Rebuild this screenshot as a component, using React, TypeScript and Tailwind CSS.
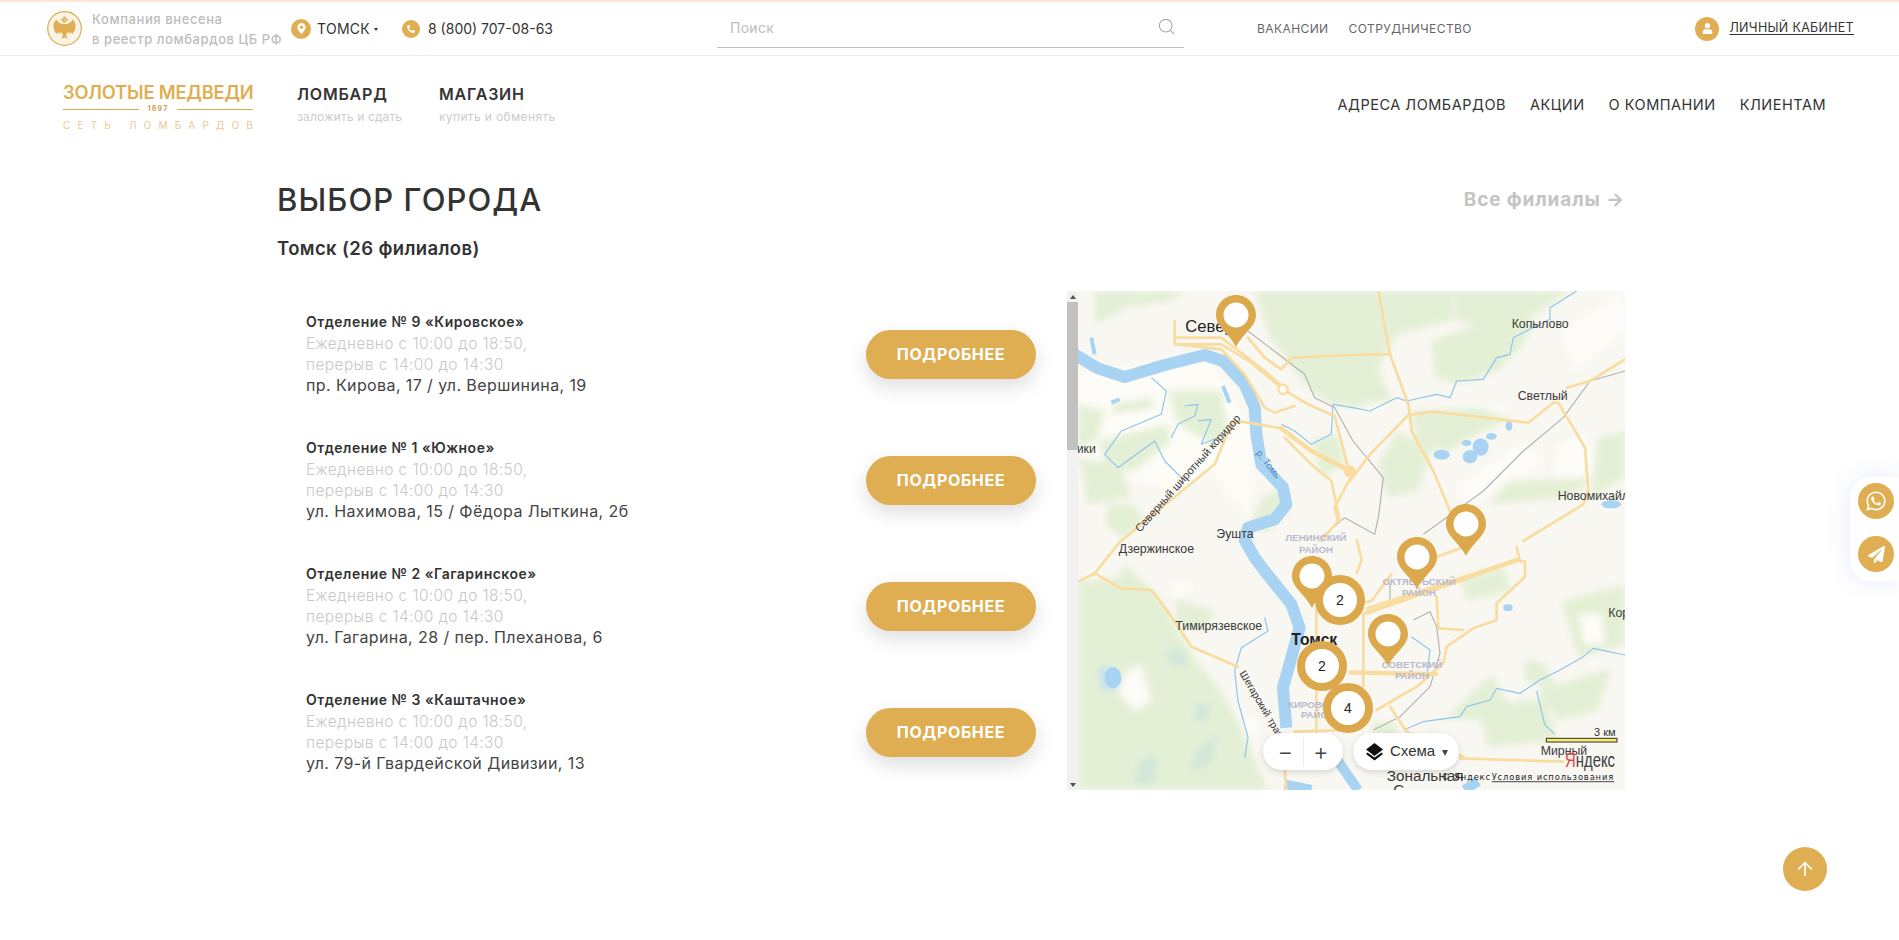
import { ArrowUp, Search } from "lucide-react";
import { FaMapMarkerAlt, FaPaperPlane, FaPhoneAlt, FaUser, FaWhatsapp } from "react-icons/fa";

const branches = [
  { title: "Отделение № 9 «Кировское»", address: "пр. Кирова, 17 / ул. Вершинина, 19" },
  { title: "Отделение № 1 «Южное»", address: "ул. Нахимова, 15 / Фёдора Лыткина, 2б" },
  { title: "Отделение № 2 «Гагаринское»", address: "ул. Гагарина, 28 / пер. Плеханова, 6" },
  { title: "Отделение № 3 «Каштачное»", address: "ул. 79-й Гвардейской Дивизии, 13" },
];

const pins = [
  "left-[138px] top-[4px]",
  "left-[368px] top-[213px]",
  "left-[319px] top-[246px]",
  "left-[214px] top-[265px]",
  "left-[290px] top-[323px]",
];

const clusters = [
  { n: 2, pos: "left-[237px] top-[284px]" },
  { n: 2, pos: "left-[219px] top-[350px]" },
  { n: 4, pos: "left-[245px] top-[392px]" },
];

const greens = [
  "M530 0 L1130 0 L1120 90 L960 130 L900 230 L940 330 L820 345 L770 345 L700 300 L640 230 L570 130 Z",
  "M50 100 L150 50 L280 30 L320 0 L50 0 Z",
  "M270 300 L430 300 L450 420 L400 460 L300 400 Z",
  "M0 340 L80 360 L60 440 L0 480 Z",
  "M100 340 L220 320 L230 350 L110 370 Z",
  "M60 450 L270 400 L280 450 L170 540 L90 540 Z",
  "M0 500 L130 520 L160 620 L30 640 Z",
  "M90 640 L170 640 L200 690 L130 740 L80 700 Z",
  "M1060 150 L1300 60 L1370 100 L1320 180 L1260 240 L1140 280 L1070 260 Z",
  "M1130 0 L1480 0 L1400 50 L1310 120 L1130 90 Z",
  "M820 190 L900 200 L920 330 L820 350 Z",
  "M1000 360 L1200 350 L1300 380 L1110 480 L1020 470 Z",
  "M1560 440 L1641 420 L1641 560 L1540 620 Z",
  "M1290 570 L1540 560 L1480 620 L1230 640 Z",
  "M960 420 L1060 480 L1020 600 L930 620 L900 520 Z",
  "M700 450 L780 430 L800 520 L730 560 Z",
  "M550 620 L610 590 L630 660 L560 730 L520 690 Z",
  "M0 870 L120 860 L140 820 L240 910 L340 1090 L430 1200 L500 1330 L570 1497 L0 1497 Z",
  "M290 920 L410 960 L380 1020 L300 1010 Z",
  "M1140 860 L1280 830 L1300 900 L1170 930 Z",
  "M1060 1320 L1240 1150 L1290 1240 L1220 1290 L1100 1280 L1030 1340 Z",
  "M1340 1100 L1400 1120 L1440 1200 L1340 1170 Z",
  "M1380 1200 L1600 1130 L1560 1260 L1440 1290 Z",
  "M1450 930 L1641 880 L1641 1060 L1500 1100 Z",
  "M1200 1250 L1400 1220 L1440 1350 L1230 1370 Z",
  "M880 1290 L960 1300 L940 1370 L890 1340 Z",
];

const whites = [
  "M20 480 L60 470 L50 560 L10 560 Z",
  "M180 300 L290 260 L250 340 L160 350 Z",
  "M700 60 L750 60 L720 105 Z",
  "M830 130 L930 90 L920 150 L850 160 Z",
  "M860 320 L920 310 L920 350 L870 360 Z",
  "M1100 370 L1300 340 L1220 440 L1120 480 Z",
  "M1450 120 L1640 0 L1641 120 L1490 240 Z",
  "M1440 470 L1520 420 L1540 540 L1420 600 Z",
  "M1130 590 L1340 450 L1400 520 L1180 640 Z",
  "M150 1140 L190 1120 L220 1230 L170 1260 L120 1200 Z",
  "M280 880 L340 870 L340 900 L290 930 Z",
  "M490 1290 L540 1280 L535 1330 L500 1340 Z",
  "M1500 970 L1570 970 L1580 1060 L1520 1060 Z",
];

const roads = [
  "M290 90 L290 160 L430 160 L520 215 L615 295 L690 340 L770 375 L810 530",
  "M295 140 L430 140 L560 240 L605 280",
  "M300 160 L430 175 L500 250 L560 350 L590 365 L650 345",
  "M510 140 L560 200 L610 235 L640 200 L825 192 L931 190",
  "M901 0 L936 190 L991 340 L996 375 L1001 420 L1066 540 L1116 660",
  "M816 570 L876 490 L991 372 L1066 362 L1351 395 L1426 335 L1441 335 L1521 470 L1531 600 L1516 640 L1336 750",
  "M1641 205 L1536 270 L1466 290",
  "M620 440 L700 520 L760 570 L785 690",
  "M825 545 L770 650 L780 690 L730 750",
  "M130 750 L200 690 L300 610 L410 520 L460 400 L490 392 L610 412",
  "M130 747 L50 847 L0 872",
  "M50 847 L130 892 L220 897 L280 977 L340 1067 L480 1127",
  "M715 947 L715 1347",
  "M650 1322 L800 1317",
  "M856 967 L856 1187",
  "M816 1142 L1076 1147",
  "M816 1147 L1076 1152",
  "M866 952 L1316 807 L1341 812 L1341 857 L1256 937 L1256 987 L1186 1012 L1106 1067 L1096 1117 L1016 1187 L896 1257",
  "M1076 917 L1081 1012 L1156 1017",
  "M1316 767 L1326 812",
  "M1146 1402 L1456 1412",
  "M936 1247 L986 1322 L1156 1397",
  "M620 1437 L625 1497",
  "M836 747 L851 807 L836 847",
  "M716 950 L780 950 L880 930 L940 850",
  "M1016 820 L1180 760",
];

const thickRoads = ["M610 412 L700 480 L825 545", "M866 965 L1316 807"];

const rivers = [
  "M220 260 L265 300 L250 370 L130 420 L80 490 L120 530 L230 450 L260 510 L310 560",
  "M320 345 L360 340 L350 375 L300 400 L280 440",
  "M360 390 L400 385 L370 460 L420 440",
  "M610 400 L650 420 L700 460 L760 430 L765 340 L825 350 L876 360 L956 320 L986 330 L1076 310 L1116 320 L1136 270 L1216 265 L1256 200 L1296 190 L1306 140 L1356 115 L1416 85 L1416 50 L1496 0",
  "M976 1317 L1036 1292 L1146 1277 L1166 1247 L1236 1227 L1256 1192 L1326 1207 L1386 1167 L1446 1137 L1516 1097 L1546 1072 L1641 1092",
  "M1046 1157 L1056 1077 L1000 1037",
  "M1376 1200 L1400 1300 L1430 1330",
  "M560 980 L570 1020 L490 1070 L470 1140 L480 1230 L510 1340 L500 1400",
];

const rails = [
  "M510 120 L680 250 L710 320 L770 350 L825 450 L916 560 L901 680 L890 730 L800 680 L730 740",
  "M1036 730 L1216 600 L1336 480 L1456 380 L1536 270 L1641 240",
  "M936 927 L936 877 M1006 987 L1056 962 L1076 1007 L1086 1087 L1056 1187 L966 1277 L886 1317",
];

const lakes = [
  { cx: 1091, cy: 491, rx: 24, ry: 15 },
  { cx: 1176, cy: 497, rx: 22, ry: 20 },
  { cx: 1208, cy: 468, rx: 24, ry: 26 },
  { cx: 1240, cy: 436, rx: 16, ry: 10 },
  { cx: 1166, cy: 456, rx: 14, ry: 9 },
  { cx: 1293, cy: 405, rx: 10, ry: 15 },
  { cx: 1600, cy: 640, rx: 30, ry: 12 },
  { cx: 1290, cy: 950, rx: 14, ry: 10 },
  { cx: 105, cy: 1160, rx: 25, ry: 32 },
];

function YandexMap() {
  return (
    <svg viewBox="0 0 1641 1497" className="absolute inset-0 h-full w-full font-['Liberation_Sans',sans-serif]">
      <defs>
        <filter id="soft" x="-5%" y="-5%" width="110%" height="110%">
          <feGaussianBlur stdDeviation="9" />
        </filter>
        <filter id="line" x="-5%" y="-5%" width="110%" height="110%">
          <feGaussianBlur stdDeviation="1.2" />
        </filter>
      </defs>
      <rect width="1641" height="1497" fill="#f9f7f2" />
      <g filter="url(#soft)">
        {whites.slice(0, 9).map((d) => (
          <path key={d} d={d} fill="#fdfcf8" />
        ))}
        <path d="M0 240 L400 200 L520 420 L520 700 L400 540 L300 600 L180 570 L0 560 Z" fill="#fdfcf6" />
        {greens.map((d) => (
          <path key={d} d={d} fill="#e4f0d6" />
        ))}
        {whites.slice(9).map((d) => (
          <path key={d} d={d} fill="#fdfcf8" />
        ))}
        <path d="M265 1075 L320 1075 L330 1130 L270 1120 Z M350 1240 L400 1240 L390 1290 L350 1290 Z M180 1410 L240 1390 L230 1480 L170 1480 Z M350 1380 L420 1330 L400 1420 L340 1440 Z" fill="#d2e7da" />
        <path d="M60 1130 L95 1125 L125 1190 L70 1200 Z" fill="#c6e0ef" />
      </g>

      <g filter="url(#line)">
        {rivers.map((d) => (
          <path key={d} d={d} fill="none" stroke="#8ec5ec" strokeWidth="3.5" strokeLinejoin="round" />
        ))}
        <path
          d="M-10 190 L60 232 L140 258 L260 222 L380 192 L435 210 L500 280 L530 350 L535 430 L550 520 L615 590 L625 640 L590 685 L510 710 L500 747 L530 800 L560 840 L640 940 L665 1010 L640 1100 L615 1190 L625 1310"
          fill="none"
          stroke="#a8d3f3"
          strokeWidth="36"
          strokeLinejoin="round"
        />
        <path d="M620 1480 L700 1497 M780 1410 L840 1497 M1160 1497 L1200 1470" stroke="#a8d3f3" strokeWidth="30" fill="none" />
        <path d="M40 140 L50 190 M435 285 L455 335 M125 325 L100 335" stroke="#a8d3f3" strokeWidth="12" fill="none" />
        {lakes.map((l) => (
          <ellipse key={l.cx} cx={l.cx} cy={l.cy} rx={l.rx} ry={l.ry} fill="#a8d3f3" />
        ))}

        {rails.map((d) => (
          <path key={d} d={d} fill="none" stroke="#b3b3b3" strokeWidth="3.5" strokeLinejoin="round" />
        ))}
        {roads.map((d) => (
          <path key={d} d={d} fill="none" stroke="#f9dc9f" strokeWidth="8" strokeLinejoin="round" strokeLinecap="round" />
        ))}
        {thickRoads.map((d) => (
          <path key={d} d={d} fill="none" stroke="#f9dc9f" strokeWidth="14" strokeLinejoin="round" strokeLinecap="round" />
        ))}
        <circle cx="615" cy="295" r="14" fill="#fdfcf8" stroke="#f9dc9f" strokeWidth="7" />
        <circle cx="815" cy="540" r="18" fill="#f9dc9f" />
      </g>

      <g fontSize="37" fill="#3a3a3a">
        <text x="322" y="122" fontSize="50" fontWeight="500" fill="#222">Север</text>
        <text x="-4" y="485">ики</text>
        <text x="415" y="740">Эушта</text>
        <text x="1301" y="110">Копылово</text>
        <text x="1319" y="327">Светлый</text>
        <text x="1439" y="628">Новомихайл</text>
        <text x="122" y="787">Дзержинское</text>
        <text x="292" y="1017">Тимирязевское</text>
        <text x="1591" y="979">Кор</text>
        <text x="1388" y="1392">Мирный</text>
        <text x="640" y="1062" fontSize="47" fontWeight="700" fill="#222">Томск</text>
        <text x="926" y="1469" fontSize="46">Зональная</text>
        <text x="946" y="1512" fontSize="46">С</text>
        <text fontSize="33" transform="translate(186 725) rotate(-48.4)">Северный широтный коридор</text>
        <text fontSize="31" transform="translate(484 1147) rotate(59.5)">Шегарский тракт</text>
        <text fontSize="29" fill="#4a86b8" transform="translate(533 487) rotate(52)">р. Томь</text>
      </g>
      <g fontSize="29" fontWeight="700" fill="#b7bace" textAnchor="middle">
        <text x="714" y="750">ЛЕНИНСКИЙ</text>
        <text x="714" y="786">РАЙОН</text>
        <text x="1023" y="882">ОКТЯБРЬСКИЙ</text>
        <text x="1023" y="914">РАЙОН</text>
        <text x="1002" y="1132">СОВЕТСКИЙ</text>
        <text x="1002" y="1164">РАЙОН</text>
        <text x="720" y="1250">КИРОВСКИЙ</text>
        <text x="720" y="1280">РАЙОН</text>
      </g>

      <rect x="1405" y="1342" width="212" height="11" fill="#f4ee6b" stroke="#333" strokeWidth="3" />
      <text x="1548" y="1335" fontSize="33" fill="#333">3 км</text>
      <text transform="translate(1461 1427) scale(0.72 1)" fontSize="62" fill="#3d3d3d">
        <tspan fill="#e8433d">Я</tspan>ндекс
      </text>
      <g fontSize="25" fill="#222" className="font-['DejaVu_Sans',sans-serif]" letterSpacing="2.6">
        <text x="1090" y="1468">© Яндекс</text>
        <text x="1241" y="1468" textDecoration="underline">Условия использования</text>
      </g>
    </svg>
  );
}

function MapPin({ pos }: { pos: string }) {
  return (
    <svg width="40" height="52" viewBox="0 0 40 52" className={`absolute ${pos}`}>
      <path
        d="M20 0 C31 0 40 9 40 20 C40 32 27 38 20 52 C13 38 0 32 0 20 C0 9 9 0 20 0 Z"
        fill="#dba94c"
      />
      <circle cx="20" cy="20" r="12.5" fill="#fff" />
    </svg>
  );
}

function Emblem() {
  const half = (
    <>
      <path d="M16 14 C14 12 11 12 9.5 8.5 C7.5 10 6.5 12 6.5 15 C6.5 18 7.5 21 9.8 23 L11.2 21 L12.4 23.2 L13.8 20.8 L15.5 22.5 Z" />
      <path d="M16.8 12.5 L15.6 9.4 L13.2 9.2 L15 7.4 L16.8 8.2 L17.6 11 Z" />
    </>
  );
  return (
    <svg width="35" height="35" viewBox="0 0 35 35" className="shrink-0">
      <circle cx="17.5" cy="17.5" r="16.8" fill="#fbf3e3" stroke="#dfae52" strokeWidth="1.2" />
      <g fill="#dfae52">
        {half}
        <g transform="translate(35 0) scale(-1 1)">{half}</g>
        <path d="M15 13 L20 13 L20.5 21 L19 24 L20.8 28 L17.5 26.2 L14.2 28 L16 24 L14.5 21 Z" />
        <circle cx="17.5" cy="7" r="1.4" />
      </g>
    </svg>
  );
}

function GoldCircle({ className, children }: { className: string; children: React.ReactNode }) {
  return (
    <span className={`flex shrink-0 items-center justify-center rounded-full bg-[#dfae52] text-white ${className}`}>
      {children}
    </span>
  );
}

function TopBar() {
  return (
    <div className="flex h-[56px] items-center border-t-2 border-b border-t-[#fbe6d8] border-b-[#ececec] bg-white pl-[47px] pr-[45px]">
      <Emblem />
      <div className="ml-[10px] w-[199px] text-[13px] leading-[20px] font-medium tracking-[0.045em] whitespace-nowrap text-[#bcbcbc]">
        <div>Компания внесена</div>
        <div>в реестр ломбардов ЦБ РФ</div>
      </div>
      <GoldCircle className="h-[20px] w-[20px]">
        <FaMapMarkerAlt size={11} />
      </GoldCircle>
      <span className="ml-[6px] text-[14px] tracking-[0.02em] text-[#333]">ТОМСК</span>
      <span className="ml-[4px] mt-[2px] h-0 w-0 border-x-[2.5px] border-t-[3px] border-x-transparent border-t-[#333]" />
      <GoldCircle className="ml-[24px] h-[18px] w-[18px]">
        <FaPhoneAlt size={8} />
      </GoldCircle>
      <span className="ml-[8px] text-[14px] text-[#333]">8 (800) 707-08-63</span>
      <div className="ml-[164px] flex h-[46px] w-[467px] items-center justify-between self-start border-b border-[#bdbdbd] pl-[13px] pr-[8px] pt-[6px]">
        <span className="text-[14px] tracking-[0.02em] text-[#bdbdbd]">Поиск</span>
        <Search size={19} strokeWidth={1.4} className="mt-[-3px] text-[#aaa]" />
      </div>
      <nav className="ml-[73px] flex gap-[20px] text-[12px] tracking-[0.035em] text-[#666]">
        <span>ВАКАНСИИ</span>
        <span>СОТРУДНИЧЕСТВО</span>
      </nav>
      <div className="ml-auto flex items-center">
        <GoldCircle className="h-[24px] w-[24px]">
          <FaUser size={11} />
        </GoldCircle>
        <span className="ml-[10px] text-[12.5px] tracking-[0.025em] text-[#333] underline underline-offset-2">
          ЛИЧНЫЙ КАБИНЕТ
        </span>
      </div>
    </div>
  );
}

function Logo() {
  return (
    <div className="w-[190px] pt-[4px] text-center text-[#dfae52]">
      <div className="text-[18.3px] leading-[22px] font-semibold tracking-[-0.01em] whitespace-nowrap">ЗОЛОТЫЕ МЕДВЕДИ</div>
      <div className="mt-[2px] flex items-center gap-[8px]">
        <span className="h-px flex-1 bg-[#dfae52]" />
        <span className="text-[7px] leading-[8px] font-bold tracking-[0.18em] text-[#c9a35a]">1897</span>
        <span className="h-px flex-1 bg-[#dfae52]" />
      </div>
      <div className="mt-[6px] flex justify-between whitespace-nowrap text-[10px] leading-[12px] text-[#e6cb94]">
        <span className="tracking-[0.72em]">СЕТЬ</span>
        <span className="mr-[-7px] tracking-[0.72em]">ЛОМБАРДОВ</span>
      </div>
    </div>
  );
}

function MainNav() {
  return (
    <div className="flex h-[96px] items-center pl-[63px] pr-[73px]">
      <Logo />
      <div className="ml-[44px] w-[142px]">
        <div className="text-[16px] leading-[20px] font-semibold tracking-[0.05em] text-[#333]">ЛОМБАРД</div>
        <div className="mt-[5px] text-[12px] leading-[16px] tracking-[0.01em] text-[#ccc]">заложить и сдать</div>
      </div>
      <div>
        <div className="text-[16px] leading-[20px] font-semibold tracking-[0.05em] text-[#333]">МАГАЗИН</div>
        <div className="mt-[5px] text-[12px] leading-[16px] tracking-[0.03em] text-[#ccc]">купить и обменять</div>
      </div>
      <nav className="ml-auto flex gap-[24px] pt-[1px] text-[14.5px] tracking-[0.035em] text-[#333]">
        <span>АДРЕСА ЛОМБАРДОВ</span>
        <span>АКЦИИ</span>
        <span>О КОМПАНИИ</span>
        <span>КЛИЕНТАМ</span>
      </nav>
    </div>
  );
}

function BranchRow({ title, address }: { title: string; address: string }) {
  return (
    <div className="flex h-[126px] items-center pl-[29px] pr-[31px]">
      <div className="flex-1">
        <div className="mb-[1px] text-[14px] leading-[20px] font-semibold tracking-[0.035em] text-[#333]">{title}</div>
        <div className="text-[15.5px] leading-[21px] font-light tracking-[0.025em] text-[#c8c8c8]">
          <div>Ежедневно с 10:00 до 18:50,</div>
          <div>перерыв с 14:00 до 14:30</div>
        </div>
        <div className="text-[16px] leading-[21px] tracking-[0.025em] text-[#444]">{address}</div>
      </div>
      <button className="h-[49px] w-[170px] rounded-full bg-[#dfae52] text-[16px] font-bold tracking-[0.04em] text-white shadow-[0_8px_20px_rgba(0,0,0,0.13)]">
        ПОДРОБНЕЕ
      </button>
    </div>
  );
}

function Scrollbar() {
  return (
    <div className="flex h-full w-[11px] shrink-0 flex-col items-center bg-[#f1f1f1]">
      <span className="mt-[4px] h-0 w-0 border-x-[3px] border-b-[4px] border-x-transparent border-b-[#505050]" />
      <span className="mt-[3px] h-[148px] w-full bg-[#c1c1c1]" />
      <span className="mb-[3px] mt-auto h-0 w-0 border-x-[3px] border-t-[4px] border-x-transparent border-t-[#505050]" />
    </div>
  );
}

function MapControls() {
  return (
    <>
      <div className="absolute left-[185px] top-[442px] flex h-[37px] w-[80px] items-center rounded-full bg-white px-[2px] text-[#444] shadow-[0_2px_6px_rgba(0,0,0,0.15)]">
        <span className="flex flex-1 justify-center border-r border-[#eee] pl-[3px] text-[24px] leading-[28px] font-light">−</span>
        <span className="flex flex-1 justify-center pr-[3px] text-[24px] leading-[28px] font-light">+</span>
      </div>
      <div className="absolute left-[275px] top-[442px] flex h-[37px] w-[106px] items-center rounded-full bg-white pl-[12px] font-['Liberation_Sans',sans-serif] text-[15px] text-[#333] shadow-[0_2px_6px_rgba(0,0,0,0.15)]">
        <svg width="19" height="19" viewBox="0 0 19 19">
          <path d="M9.5 1 L18 7.5 L9.5 14 L1 7.5 Z" fill="#111" />
          <path d="M2.5 10.5 L9.5 15.5 L16.5 10.5 L18 12 L9.5 18.5 L1 12 Z" fill="#111" />
        </svg>
        <span className="ml-[6px]">Схема</span>
        <span className="ml-[7px] mt-[2px] h-0 w-0 border-x-[3.5px] border-t-[6px] border-x-transparent border-t-[#444]" />
      </div>
    </>
  );
}

export default function App() {
  return (
    <div className="relative h-[940px] overflow-hidden bg-white font-['Inter','Liberation_Sans',sans-serif]">
      <TopBar />
      <MainNav />

      <main className="pl-[277px] pr-[274px] pt-[28px]">
        <div className="flex items-center justify-between">
          <h1 className="text-[31px] leading-[40px] font-medium tracking-[0.035em] text-[#333]">ВЫБОР ГОРОДА</h1>
          <span className="text-[19px] font-bold tracking-[0.045em] text-[#c4c4c4]">Все филиалы →</span>
        </div>
        <h2 className="mt-[16px] text-[18.5px] leading-[24px] font-semibold tracking-[0.02em] text-[#333]">
          Томск (26 филиалов)
        </h2>

        <div className="mt-[31px] flex h-[499px]">
          <div className="w-[790px] shrink-0 overflow-hidden">
            {branches.map((b) => (
              <BranchRow key={b.title} title={b.title} address={b.address} />
            ))}
          </div>
          <Scrollbar />
          <div className="relative h-[499px] w-[547px] overflow-hidden">
            <YandexMap />
            {pins.map((pos) => (
              <MapPin key={pos} pos={pos} />
            ))}
            {clusters.map((c) => (
              <div
                key={c.pos}
                className={`absolute flex h-[50px] w-[50px] items-center justify-center rounded-full border-[8px] border-[#dba94c] bg-white font-['Liberation_Sans',sans-serif] text-[14px] text-[#222] ${c.pos}`}
              >
                {c.n}
              </div>
            ))}
            <MapControls />
          </div>
        </div>
      </main>

      <div className="absolute right-0 top-[477px] flex h-[104px] w-[49px] flex-col items-start gap-[17px] rounded-l-[20px] bg-white pl-[8px] pt-[6px] shadow-[0_0_24px_rgba(90,110,230,0.14)]">
        <GoldCircle className="h-[36px] w-[36px]">
          <FaWhatsapp size={22} />
        </GoldCircle>
        <GoldCircle className="h-[36px] w-[36px]">
          <FaPaperPlane size={17} />
        </GoldCircle>
      </div>
      <GoldCircle className="absolute left-[1783px] top-[847px] h-[44px] w-[44px]">
        <ArrowUp size={22} strokeWidth={1.8} />
      </GoldCircle>
    </div>
  );
}
